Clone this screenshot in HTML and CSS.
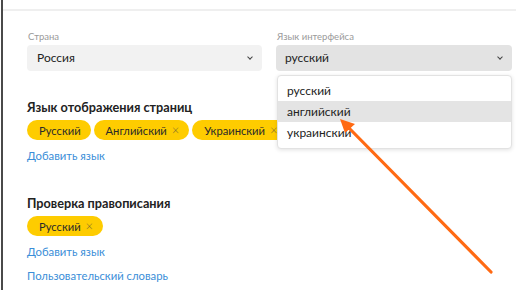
FILE: index.html
```html
<!DOCTYPE html>
<html lang="ru">
<head>
<meta charset="utf-8"/>
<title>Настройки языка</title>
<link rel="stylesheet" href="styles.css">
</head>
<body>
<div class="page">
<div class="topbar"></div>
<div class="content">
<div class="selects">
<div class="field">
<label>Страна</label>
<div class="select">Россия<span class="chev"></span></div>
</div>
<div class="field">
<label>Язык интерфейса</label>
<div class="select open">русский<span class="chev"></span></div>
<ul class="menu">
<li>русский</li>
<li class="hover">английский</li>
<li>украинский</li>
</ul>
</div>
</div>

<h3>Язык отображения страниц</h3>
<div class="chips">
<span class="chip">Русский</span>
<span class="chip">Английский<i>×</i></span>
<span class="chip">Украинский<i>×</i></span>
</div>
<a class="link" href="#">Добавить язык</a>

<h3 class="second">Проверка правописания</h3>
<div class="chips">
<span class="chip">Русский<i>×</i></span>
</div>
<a class="link" href="#">Добавить язык</a>
<a class="link" href="#">Пользовательский словарь</a>
</div>
</div>
<svg class="arrow" width="516" height="290" viewBox="0 0 516 290">
<line x1="491" y1="272" x2="346" y2="125" stroke="#ff6a13" stroke-width="3.2" stroke-linecap="round"/>
<polygon points="340,119 355,124 345,133" fill="#ff6a13"/>
</svg>
</body>
</html>
```
FILE: styles.css
```css
body {
    margin: 0;
    font-family: Lato, "Open Sans", sans-serif;
    background: #fff;
    color: #222;
}
.page {
    margin-left: 1px;
    border-left: 2px solid #4a4a4a;
    min-height: 290px;
    box-sizing: border-box;
}
.topbar {
    height: 9px;
    border-bottom: 2px solid #efefef;
}
.content {
    padding: 20px 0 0 24px;
}
.selects {
    display: grid;
    grid-template-columns: 235px 236px;
    column-gap: 14px;
}
.field {
    position: relative;
}
.field label {
    display: block;
    font-size: 9.5px;
    line-height: 12px;
    color: #9a9a9a;
    margin-bottom: 2px;
    padding-left: 1px;
}
.select {
    position: relative;
    height: 26px;
    line-height: 26px;
    background: #f2f2f2;
    border-radius: 4px;
    padding-left: 10px;
    font-size: 12px;
    color: #222;
}
.select.open {
    background: #e3e3e3;
    padding-left: 9px;
}
.chev {
    position: absolute;
    right: 10px;
    top: 10px;
    width: 3px;
    height: 3px;
    border-right: 1.5px solid #444;
    border-bottom: 1.5px solid #444;
    transform: rotate(45deg);
}
.menu {
    position: absolute;
    left: 1px;
    right: 0;
    top: 44px;
    margin: 0;
    padding: 4px 0 5px;
    list-style: none;
    background: #fff;
    border: 1px solid #e2e2e2;
    border-radius: 4px;
    box-shadow: 0 1px 4px rgba(0,0,0,0.12);
    z-index: 2;
}
.menu li {
    height: 21px;
    line-height: 21px;
    padding-left: 9px;
    font-size: 12px;
    color: #222;
}
.menu li.hover {
    background: #e4e4e4;
}
h3 {
    margin: 28px 0 4px;
    font-size: 12.7px;
    line-height: 17px;
    font-weight: 700;
    color: #222;
}
h3.second {
    margin-top: 31px;
}
.chips {
    display: flex;
    gap: 3px;
}
.chip {
    display: inline-flex;
    align-items: center;
    height: 20px;
    padding: 0 10px 0 12px;
    background: #fecc00;
    border-radius: 10px;
    font-size: 11.2px;
    color: #2a2a2a;
}
.chip i {
    font-style: normal;
    color: #7a6a30;
    margin-left: 5px;
    font-size: 13px;
    font-weight: 300;
}
.link {
    display: block;
    font-size: 11.3px;
    line-height: 16px;
    color: #3a8ed8;
    text-decoration: none;
    margin-top: 8px;
}
.link + .link {
    margin-top: 8px;
}
.arrow {
    position: absolute;
    left: 0;
    top: 0;
    pointer-events: none;
    z-index: 3;
}
```
